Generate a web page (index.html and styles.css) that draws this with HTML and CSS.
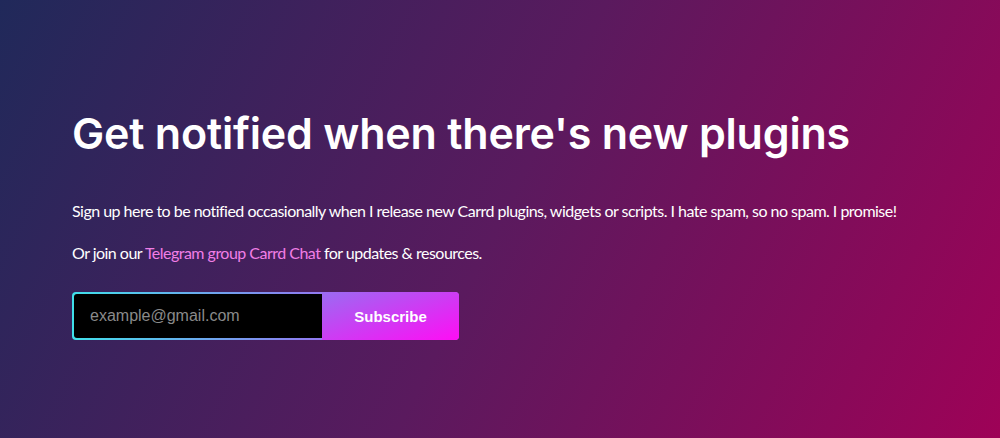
FILE: index.html
```html
<!DOCTYPE html>
<html lang="en">
<head>
    <meta charset="UTF-8">
    <meta name="viewport" content="width=device-width, initial-scale=1.0">
    <title>Get notified</title>
    <link rel="stylesheet" href="styles.css">
</head>
<body>
    <div class="container">
        <h1 class="title">Get notified when there's new plugins</h1>
        <p class="text">Sign up here to be notified occasionally when I release new Carrd plugins, widgets or scripts. I hate spam, so no spam. I promise!</p>
        <p class="text">Or join our <a href="#">Telegram group Carrd Chat</a> for updates &amp; resources.</p>
        <form class="signup">
            <input type="email" placeholder="example@gmail.com">
            <button type="button">Subscribe</button>
        </form>
    </div>
</body>
</html>
```

FILE: styles.css
```css
html, body {
    height: 100%;
}
body {
    margin: 0;
    font-family: 'Lato', sans-serif;
    background: linear-gradient(116deg, #20295a, #5a1a5e 50%, #9e0257);
    color: #fff;
}
.container {
    padding: 106px 72px 0;
}
.title {
    margin: 0 0 40px;
    font-family: 'Inter', sans-serif;
    font-weight: 600;
    font-size: 43px;
    line-height: 54px;
    letter-spacing: -0.2px;
}
.text {
    margin: 0 0 20px;
    font-size: 16px;
    line-height: 22px;
    letter-spacing: -0.52px;
}
.text a {
    color: #f17ee6;
    text-decoration: none;
}
.signup {
    display: flex;
    width: 385px;
    margin-top: 28px;
    padding: 2px 0 2px 2px;
    border-radius: 4px;
    background: linear-gradient(to right, #40e0ea, #8c7ef0 60%, #c060f0);
}
.signup input {
    width: 248px;
    height: 44px;
    box-sizing: border-box;
    padding: 0 16px;
    border: none;
    border-radius: 3px 0 0 3px;
    background-color: #000;
    color: #fff;
    font-family: 'Liberation Sans', Arial, sans-serif;
    font-size: 16px;
    outline: none;
}
.signup input::placeholder {
    color: #8a8a8a;
}
.signup button {
    flex: 1;
    margin: -2px 0;
    border: none;
    border-radius: 0 4px 4px 0;
    background: linear-gradient(to bottom right, #9a6cf2, #ff0df5);
    color: #fff;
    font-family: 'Liberation Sans', Arial, sans-serif;
    font-weight: bold;
    font-size: 15px;
    cursor: pointer;
}
```
